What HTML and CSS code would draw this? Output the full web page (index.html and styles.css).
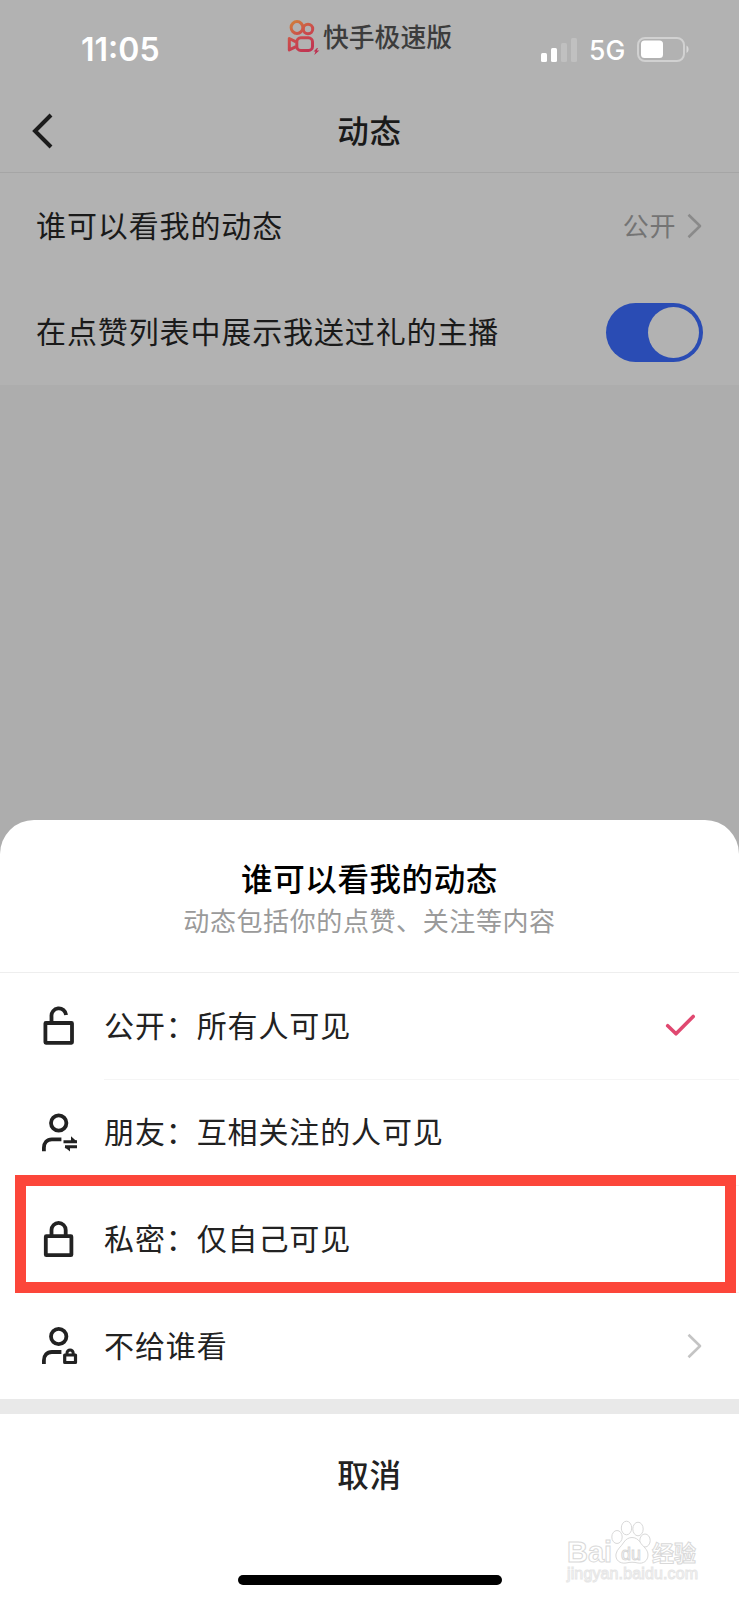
FILE: index.html
```html
<!DOCTYPE html>
<html lang="zh-CN">
<head>
<meta charset="utf-8">
<title>动态</title>
<link rel="stylesheet" href="styles.css">
</head>
<body>
<div class="phone">
  <header class="top">
    <div class="status">
      <span class="time">11:05</span>
      <div class="brand">
        <svg class="brand-logo" width="33" height="36" viewBox="0 0 33 36" fill="none">
          <defs>
            <linearGradient id="warm" gradientUnits="userSpaceOnUse" x1="4" y1="2" x2="22" y2="32">
              <stop offset="0" stop-color="#d0803a"/>
              <stop offset=".5" stop-color="#cb4a4c"/>
              <stop offset="1" stop-color="#c03452"/>
            </linearGradient>
          </defs>
          <g stroke="url(#warm)" stroke-width="3" stroke-linejoin="round">
            <circle cx="10" cy="8.500" r="5.900"/>
            <circle cx="21" cy="10" r="4.700"/>
            <rect x="9.800" y="18.800" width="15.700" height="12.600" rx="4"/>
            <path d="M9 22.800 2.300 19.500v11.400L9 27.700"/>
          </g>
          <path d="M30 29 26.500 32.500h2l-1.200 3.500 5-4.500h-2.500l1.200-2.500z" fill="#bd3050"/>
        </svg>
        <span class="brand-name">快手极速版</span>
      </div>
      <div class="indicators">
        <svg width="36" height="24" viewBox="0 0 36 24" fill="#fff">
          <rect x="0" y="15" width="6" height="9" rx="1.500"/>
          <rect x="10" y="10" width="6" height="14" rx="1.500"/>
          <rect x="20" y="5" width="6" height="19" rx="1.500" opacity=".18"/>
          <rect x="30" y="0" width="6" height="24" rx="1.500" opacity=".18"/>
        </svg>
        <span class="network">5G</span>
        <svg width="53" height="25" viewBox="0 0 53 25" fill="none">
          <rect x="1" y="1" width="46" height="23" rx="7" stroke="#fff" stroke-opacity=".4" stroke-width="2"/>
          <rect x="4" y="3.500" width="22" height="17.500" rx="3.500" fill="#fff"/>
          <path d="M49.500 8.500c2.800 1.500 2.800 6 0 7.500z" fill="#fff" fill-opacity=".5"/>
        </svg>
      </div>
    </div>
    <nav class="nav">
      <svg class="back" width="22" height="36" viewBox="0 0 22 36" fill="none" stroke="#1c1c1c" stroke-width="4"><path d="M19 2 3 18l16 16"/></svg>
      <h1 class="nav-title">动态</h1>
    </nav>
  </header>
  <section class="settings">
    <div class="setting">
      <span class="label">谁可以看我的动态</span>
      <span class="value">公开</span>
      <svg class="chevron" width="15" height="26" viewBox="0 0 15 26" fill="none" stroke="#8a8a8a" stroke-width="2.600" stroke-linejoin="round"><path d="m1.500 1.800 11.500 11.200L1.500 24.200"/></svg>
    </div>
    <div class="setting">
      <span class="label">在点赞列表中展示我送过礼的主播</span>
      <span class="toggle"><span class="knob"></span></span>
    </div>
  </section>
  <main class="sheet">
    <div class="sheet-head">
      <h2 class="sheet-title">谁可以看我的动态</h2>
      <p class="sheet-note">动态包括你的点赞、关注等内容</p>
    </div>
    <div class="option">
      <svg class="icon" width="38" height="40" viewBox="0 0 38 40" fill="none" stroke="#222" stroke-width="3.800" stroke-linejoin="round">
        <rect x="5.400" y="17" width="26.600" height="19.800" rx=".5"/>
        <path d="M11.500 17v-6.500a7.300 7.300 0 0 1 14.600-1.500"/>
      </svg>
      <div class="option-body ruled">
        <span class="label">公开：所有人可见</span>
        <svg class="check" width="31" height="23" viewBox="0 0 31 23" fill="none" stroke="#e04870" stroke-width="3.600" stroke-linecap="round" stroke-linejoin="round"><path d="m2.700 11.700 8.300 8.100L28.200 2.500"/></svg>
      </div>
    </div>
    <div class="option">
      <svg class="icon" width="38" height="40" viewBox="0 0 38 40" fill="none" stroke="#222" stroke-width="3.800">
        <circle cx="18.700" cy="10" r="7.700"/>
        <path d="M3.900 38.300v-3.500c0-5 3-8.500 8-8.500h9.500"/>
        <path d="M23.500 28.700H37M25 33.700h12" stroke-width="2.900"/>
        <path d="M31 23.200v5h5.500zM30 38.500v-4.500h-5.500z" fill="#222" stroke="none"/>
      </svg>
      <div class="option-body ruled"><span class="label">朋友：互相关注的人可见</span></div>
    </div>
    <div class="option highlighted">
      <svg class="icon" width="38" height="40" viewBox="0 0 38 40" fill="none" stroke="#222" stroke-width="3.800" stroke-linejoin="round">
        <rect x="5.800" y="17.200" width="25.600" height="19" rx=".5"/>
        <path d="M11.500 17.200v-6.200a7.100 7.100 0 0 1 14.200 0v6.200"/>
      </svg>
      <div class="option-body ruled"><span class="label">私密：仅自己可见</span></div>
    </div>
    <div class="option">
      <svg class="icon" width="38" height="40" viewBox="0 0 38 40" fill="none" stroke="#222" stroke-width="3.800">
        <circle cx="18.700" cy="10.500" r="7.700"/>
        <path d="M3.900 38V34.500c0-5 3-8.500 8-8.500h9.500"/>
        <rect x="24.700" y="29" width="10.800" height="7.500" stroke-width="3.200" stroke-linejoin="round"/>
        <path d="M27 28.500v-1.500a3.100 3 0 0 1 6.200 0v1.500" stroke-width="3"/>
      </svg>
      <div class="option-body">
        <span class="label">不给谁看</span>
        <svg class="chevron" width="15" height="26" viewBox="0 0 15 26" fill="none" stroke="#c4c4c4" stroke-width="2.600" stroke-linejoin="round"><path d="m1.500 1.800 11.500 11.200L1.500 24.200"/></svg>
      </div>
    </div>
    <div class="gap"></div>
    <div class="cancel">取消</div>
    <div class="home-bar"></div>
    <svg class="watermark" width="140" height="75" viewBox="0 0 140 75" fill="#fff" stroke="#d9d9d9" stroke-width="1">
      <text class="wm-latin" x="2" y="42" font-size="29" textLength="45">Bai</text>
      <text class="wm-cjk" x="87" y="41" font-size="22" textLength="44">经验</text>
      <ellipse cx="52" cy="17" rx="5.200" ry="6.500"/>
      <ellipse cx="61.500" cy="8" rx="5.200" ry="6.800"/>
      <ellipse cx="73" cy="9" rx="5.200" ry="6.800"/>
      <ellipse cx="80" cy="20.500" rx="5.200" ry="6.500"/>
      <path d="M59 22c4-6 12-6 16 0 3 5 8 7 8 13s-5 9-10 8c-4-1-8-1-12 0-6 1-11-3-10-9 1-5 5-7 8-12z"/>
      <text class="wm-latin wm-du" x="56" y="40" font-size="18" textLength="20" lengthAdjust="spacingAndGlyphs">du</text>
      <text class="wm-url" x="2" y="59" font-size="16" textLength="131">jingyan.baidu.com</text>
    </svg>
  </main>
</div>
</body>
</html>
```
FILE: styles.css
```css
* { box-sizing: border-box; }
body {
  margin: 0;
  font-family: "Liberation Sans", "Noto Sans CJK SC", sans-serif;
  color: #1a1a1a;
}
h1, h2, p { margin: 0; }
svg { display: block; flex: none; }
.phone {
  width: 739px;
  height: 1600px;
  display: flex;
  flex-direction: column;
  background: #adadad;
  overflow: hidden;
}
.top { height: 173px; background: #b2b2b2; border-bottom: 1px solid #a5a5a5; }
.status { height: 92px; display: flex; align-items: flex-start; }
.time {
  width: 206px;
  margin: 30px 0 0 81px;
  font: 600 32px/40px Inter, sans-serif;
  color: #fff;
}
.brand { display: flex; margin-top: 19px; width: 254px; }
.brand-name {
  margin: 1px 0 0 3px;
  font-size: 25.800px;
  line-height: 36px;
  font-weight: 500;
  color: #3c3c3c;
  white-space: nowrap;
}
.indicators { display: flex; align-items: center; margin-top: 37px; height: 25px; }
.network {
  width: 48px;
  margin-left: 12px;
  font: 500 26.500px/25px Inter, sans-serif;
  padding-top: 1px;
  color: #fff;
}
.nav {
  height: 80px;
  display: grid;
  grid-template-columns: 1fr auto 1fr;
  align-items: center;
  padding: 0 32px 2px;
}
.nav-title { padding-top: 2px; font-size: 31.500px; line-height: 44px; font-weight: 500; letter-spacing: .8px; }
.settings { height: 212px; background: #b2b2b2; }
.setting { height: 106px; display: flex; align-items: center; padding: 0 37px 0 36px; }
.label { padding-top: 2px; font-size: 30px; line-height: 44px; letter-spacing: .88px; white-space: nowrap; flex: 1; }
.value { padding-top: 2px; font-size: 26px; line-height: 40px; letter-spacing: .6px; color: #747474; margin-right: 11px; }
.toggle {
  width: 97px;
  height: 59px;
  margin-right: -1px;
  border-radius: 30px;
  padding: 4px;
  background: #2a4cb4;
  display: flex;
  justify-content: flex-end;
}
.knob { width: 51px; height: 51px; border-radius: 50%; background: #b2b2b2; }
.sheet {
  position: relative;
  margin-top: auto;
  height: 780px;
  border-radius: 34px 34px 0 0;
  background: #fff;
}
.sheet-head {
  height: 153px;
  padding-top: 38px;
  border-bottom: 1px solid #eee;
  text-align: center;
}
.sheet-title { font-size: 31.500px; line-height: 44px; letter-spacing: .6px; font-weight: 500; color: #000; }
.sheet-note { font-size: 26px; line-height: 40px; letter-spacing: .6px; color: #9a9a9a; }
.option { height: 106.500px; display: flex; align-items: center; padding-left: 40px; color: #222; }
.option-body {
  flex: 1;
  height: 100%;
  margin-left: 26px;
  display: flex;
  align-items: center;
}
.ruled { border-bottom: 1px solid #f5f5f5; }
.option .chevron { margin-right: 37px; }
.check { margin-right: 43px; }
.highlighted { position: relative; }
.highlighted::after {
  content: "";
  position: absolute;
  left: 15px;
  right: 3px;
  top: -11px;
  bottom: 0;
  border: 11px solid #fc463a;
}
.gap { height: 15px; background: #e9e9e9; }
.cancel {
  padding-top: 40px;
  height: 161px;
  text-align: center;
  font-size: 31.500px;
  line-height: 44px;
  letter-spacing: .8px;
  font-weight: 500;
  color: #222;
}
.home-bar { width: 264px; height: 10px; margin: 0 auto; border-radius: 5px; background: #000; }
.watermark { position: absolute; left: 565px; top: 700px; }
.wm-latin { font-family: "Liberation Sans", sans-serif; font-weight: 700; }
.wm-du { font-weight: 400; }
.wm-cjk { font-family: "Noto Sans CJK SC", sans-serif; font-weight: 700; }
.wm-url { font-family: "Liberation Sans", sans-serif; stroke: #e6e6e6; }
```
